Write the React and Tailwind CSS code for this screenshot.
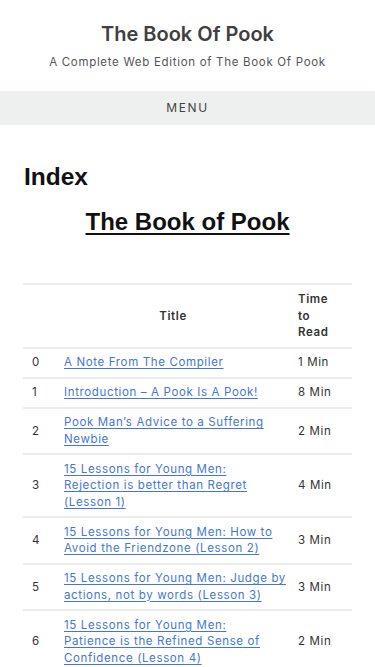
const rows = [
  ["0", ["A Note From The Compiler"], "1 Min"],
  ["1", ["Introduction – A Pook Is A Pook!"], "8 Min"],
  ["2", ["Pook Man’s Advice to a Suffering", "Newbie"], "2 Min"],
  ["3", ["15 Lessons for Young Men:", "Rejection is better than Regret", "(Lesson 1)"], "4 Min"],
  ["4", ["15 Lessons for Young Men: How to", "Avoid the Friendzone (Lesson 2)"], "3 Min"],
  ["5", ["15 Lessons for Young Men: Judge by", "actions, not by words (Lesson 3)"], "3 Min"],
  ["6", ["15 Lessons for Young Men:", "Patience is the Refined Sense of", "Confidence (Lesson 4)"], "2 Min"],
  ["7", ["15 Lessons for Young Men: Pursue", "Your Goals (Lesson 5)"], "3 Min"],
];

export default function App() {
  return (
    <div className="min-h-screen bg-white font-['Inter',sans-serif]">
      {/* Header */}
      <header className="pt-[21px] pb-[21px] text-center">
        <h1 className="text-[20px] leading-[26px] font-semibold text-[#404040]">The Book Of Pook</h1>
        <p className="mt-[7px] text-[11.5px] leading-[16px] tracking-[0.06em] text-[#555]">
          A Complete Web Edition of The Book Of Pook
        </p>
      </header>

      {/* Menu */}
      <nav className="bg-[#eef0ef] h-[34px] flex items-center justify-center">
        <span className="text-[12px] tracking-[0.14em] text-[#444]">MENU</span>
      </nav>

      {/* Content */}
      <main className="px-[23px] pt-[38px]">
        <h2 className="pl-px font-['Liberation_Sans',sans-serif] font-bold text-[24.5px] leading-[28px] text-[#111]">Index</h2>
        <h2 className="mt-[17px] text-center font-['Liberation_Sans',sans-serif] font-bold text-[24px] leading-[28px] text-[#111] underline underline-offset-[3px] decoration-2">
          The Book of Pook
        </h2>

        <table className="mt-[47px] w-full border-collapse border-t-2 border-[#ebebeb] text-[11.5px] leading-[16.5px] tracking-[0.055em] text-[#333]">
          <thead>
            <tr className="border-b-2 border-[#ebebeb]">
              <th className="w-[33px]"></th>
              <th className="font-semibold text-center py-[6px] pl-[8px] pr-[8px]">Title</th>
              <th className="w-[62px] font-semibold text-left py-[6px] pl-[8px]">
                Time<br />to<br />Read
              </th>
            </tr>
          </thead>
          <tbody>
            {rows.map(([n, lines, time]) => (
              <tr key={n} className="border-b-2 border-[#ebebeb]">
                <td className="pl-[9px] py-[5.75px] align-middle">{n}</td>
                <td className="pl-[8px] pr-[2px] py-[5.75px] align-middle whitespace-nowrap">
                  <a href="#" className="text-[#4476d8] underline underline-offset-2">
                    {lines.map((l, i) => (
                      <span key={i}>
                        {i > 0 && <br />}
                        {l}
                      </span>
                    ))}
                  </a>
                </td>
                <td className="pl-[8px] py-[5.75px] align-middle whitespace-nowrap">{time}</td>
              </tr>
            ))}
          </tbody>
        </table>
      </main>
    </div>
  );
}
